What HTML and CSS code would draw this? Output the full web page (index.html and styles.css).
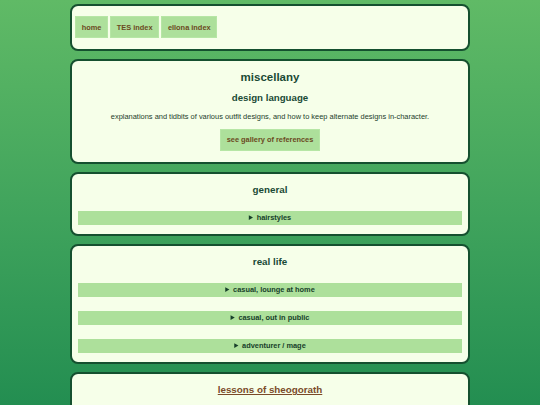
FILE: index.html
```html
<!DOCTYPE html>
<html>
<head>
<meta charset="utf-8">
<link rel="stylesheet" href="styles.css">
</head>
<body>
<div class="page">
  <div class="card nav-card">
    <nav class="nav">
      <a class="btn" href="#">home</a>
      <a class="btn" href="#">TES index</a>
      <a class="btn" href="#">ellona index</a>
    </nav>
  </div>
  <div class="card intro">
    <h1 class="title">miscellany</h1>
    <h2 class="subtitle">design language</h2>
    <p class="desc">explanations and tidbits of various outfit designs, and how to keep alternate designs in-character.</p>
    <a class="btn gallery" href="#">see gallery of references</a>
  </div>
  <div class="card section">
    <h3 class="heading">general</h3>
    <details class="fold"><summary>hairstyles</summary></details>
  </div>
  <div class="card section">
    <h3 class="heading">real life</h3>
    <details class="fold"><summary>casual, lounge at home</summary></details>
    <details class="fold"><summary>casual, out in public</summary></details>
    <details class="fold"><summary>adventurer / mage</summary></details>
  </div>
  <div class="card section last">
    <h3 class="heading"><a class="link" href="#">lessons of sheogorath</a></h3>
  </div>
</div>
</body>
</html>
```
FILE: styles.css
```css
html, body {
  margin: 0;
  padding: 0;
}
body {
  min-height: 405px;
  background: linear-gradient(to bottom, #60ba66 0%, #3fa35c 50%, #1e8a4f 100%);
  font-family: "Liberation Sans", Arial, sans-serif;
  color: #1a4a33;
}
.page {
  padding-top: 4px;
  display: flex;
  flex-direction: column;
  align-items: center;
  gap: 8px;
}
.card {
  box-sizing: border-box;
  width: 400px;
  background: #f6ffe9;
  border: 2px solid #15502f;
  border-radius: 8px;
  padding: 10px 6px 9px 6px;
  text-align: center;
}
.nav-card {
  padding: 10px 3px 11px 3px;
  text-align: left;
}
.nav {
  display: flex;
  gap: 2px;
}
.btn {
  display: inline-block;
  background: #ade09b;
  color: #6b4a22;
  font-weight: bold;
  font-size: 7.4px;
  line-height: 9px;
  padding: 6.5px 6.7px;
  text-decoration: none;
  box-shadow: inset 0 0 0 1px #b6e6a5;
}
.intro {
  padding-top: 9px;
  padding-bottom: 11.5px;
}
.title {
  margin: 0;
  font-size: 11.5px;
  line-height: 14px;
  color: #1a4a35;
}
.subtitle {
  margin: 7.5px 0 0 0;
  font-size: 9.7px;
  line-height: 12px;
  color: #1a4a35;
}
.desc {
  margin: 8.5px 0 0 0;
  font-size: 7.45px;
  line-height: 9px;
  color: #24402c;
}
.gallery {
  margin-top: 7.5px;
}
.heading {
  margin: 0;
  font-size: 9.8px;
  line-height: 12px;
  color: #1a4a35;
}
.fold {
  margin-top: 14px;
  background: #ade09b;
}
.heading + .fold {
  margin-top: 15px;
}
.fold summary {
  font-size: 7.4px;
  line-height: 14px;
  height: 14px;
  font-weight: bold;
  color: #173f2a;
  text-align: center;
  cursor: pointer;
}
.last {
  padding-bottom: 40px;
}
.link {
  color: #7a4a28;
  text-decoration: underline;
}
```
